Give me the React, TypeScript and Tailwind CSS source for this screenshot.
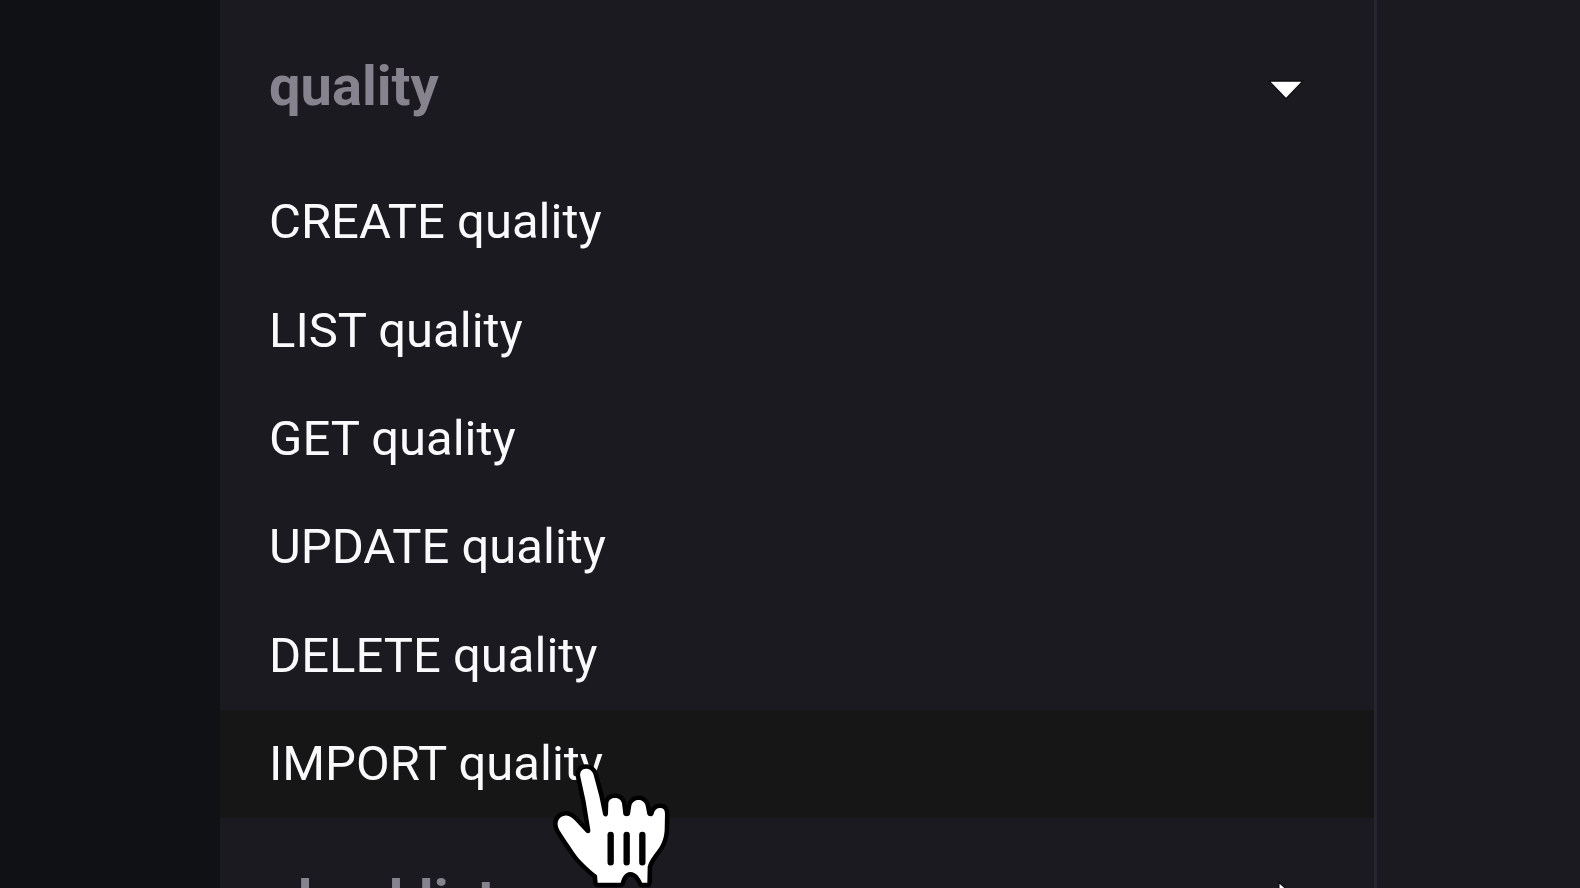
const actions = ["CREATE", "LIST", "GET", "UPDATE", "DELETE", "IMPORT"];

function Caret({ open }: { open: boolean }) {
  return (
    <svg viewBox="0 0 24 24" className="size-[74px] shrink-0" fill="#ffffff" stroke="#08080a" strokeWidth="0.7" paintOrder="stroke" aria-hidden="true">
      <path d={open ? "M7 10.6h10l-5 5.2z" : "M9.9 6.7l5.5 5-5.5 5z"} />
    </svg>
  );
}

function SectionHeader({ title, open }: { title: string; open: boolean }) {
  return (
    <button
      type="button"
      aria-expanded={open}
      className="flex h-[164px] w-full shrink-0 items-center justify-between pr-[51px] pl-[49px] text-[56px] font-bold text-[#86838f]"
    >
      {title}
      <Caret open={open} />
    </button>
  );
}

function HandPointer() {
  return (
    <svg viewBox="0 0 450 444" className="pointer-events-none absolute top-[31px] left-[320px] z-10 h-[148px] w-[150px]" aria-hidden="true">
      <path
        d="M173 425L171 403C148 384 122 363 101 332C84 306 69 286 58 267C46 244 56 227 74 224C91 222 101 235 112 246L137 273C143 280 152 277 151 267L137 181L121 107C118 92 126 83 138 83C149 83 157 89 161 102L178 166L189 220C191 228 202 230 204 219L205 186C207 166 242 165 246 187L250 220C252 228 268 228 270 220L274 194C279 172 312 171 317 194L322 220C324 227 338 229 341 219C344 204 353 201 361 201C371 201 375 208 375 219L374 268C372 291 367 304 359 318C345 339 329 355 323 377L322 425H306C299 408 288 394 271 393C255 394 247 407 242 425Z"
        fill="#ffffff"
        stroke="#000000"
        strokeWidth="27"
        strokeLinejoin="round"
        paintOrder="stroke"
      />
      <path d="M212 282V364M260 282V364M307 282V364" stroke="#000000" strokeWidth="19" strokeLinecap="round" />
    </svg>
  );
}

export default function App() {
  return (
    <div className="flex h-screen overflow-hidden bg-[#1b1a20] font-['Roboto',sans-serif] text-[#fafafc]">
      <div className="w-[220px] shrink-0 bg-[#0f1115]" />
      <nav className="min-w-0 flex-1 overflow-hidden border-r-3 border-[#262530] pt-1">
        <SectionHeader title="quality" open />
        <ul className="grid h-[650px] grid-rows-6">
          {actions.map((action) => (
            <li key={action} className="relative">
              <a
                href="#"
                className={
                  action === "IMPORT"
                    ? "flex h-full items-center bg-[#161616] pl-[49px] text-[49px]"
                    : "flex h-full items-center pl-[49px] text-[49px]"
                }
              >
                {action} quality
              </a>
              {action === "IMPORT" && <HandPointer />}
            </li>
          ))}
        </ul>
        <SectionHeader title="checklist" open={false} />
      </nav>
      <div className="w-[203px] shrink-0" />
    </div>
  );
}
